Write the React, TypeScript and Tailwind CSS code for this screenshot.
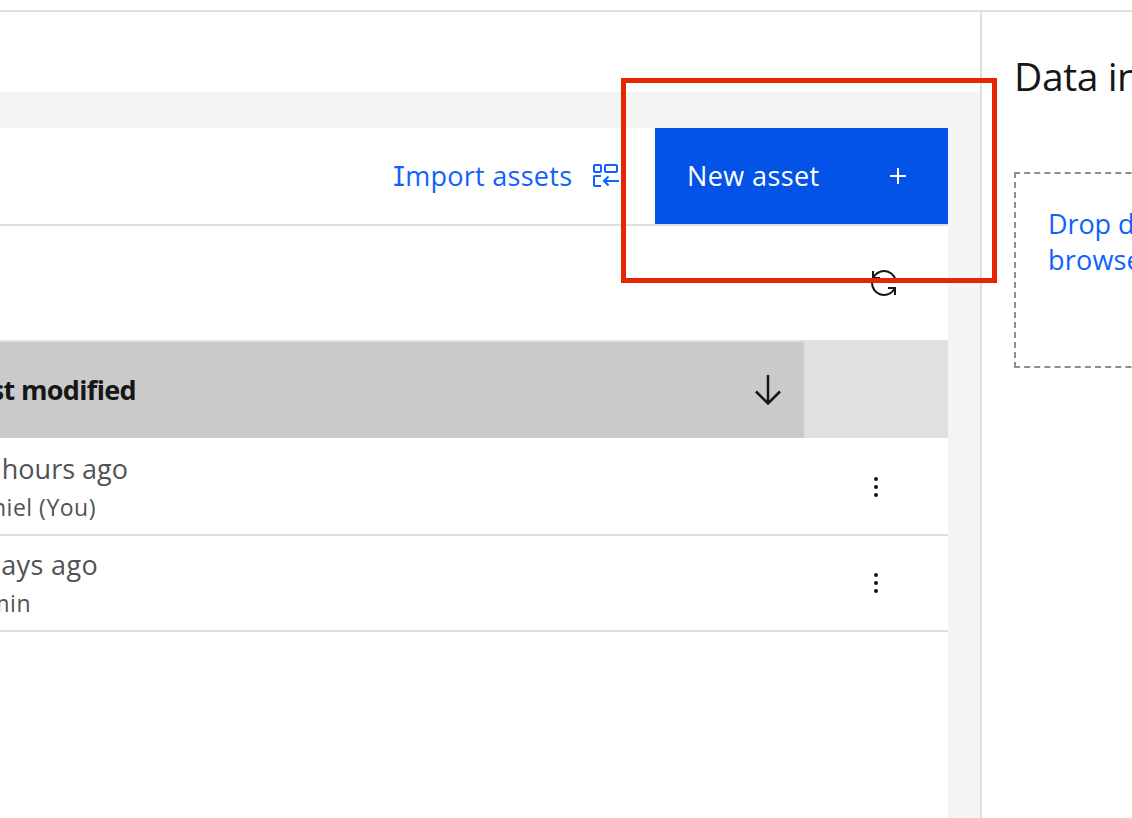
import React from "react";

function ImportIcon() {
  return (
    <svg width="32" height="32" viewBox="0 0 32 32" fill="none" stroke="currentColor" strokeWidth="2" className="shrink-0">
      <rect x="4" y="5" width="7" height="7" rx="1" />
      <rect x="15" y="5" width="12" height="7" rx="1" />
      <path d="M11 16H5a1 1 0 0 0-1 1v8a1 1 0 0 0 1 1h6" />
      <path d="M29 21H14M18.500 16.500 14 21l4.500 4.500" />
    </svg>
  );
}

function RenewIcon() {
  return (
    <svg width="32" height="32" viewBox="0 0 32 32" fill="#161616">
      <path d="M12 10H6.780A11 11 0 0 1 27 16h2A13 13 0 0 0 6 7.680V4H4v8h8ZM20 22h5.220A11 11 0 0 1 5 16H3a13 13 0 0 0 23 8.320V28h2v-8h-8Z" />
    </svg>
  );
}

function Dots() {
  return (
    <svg width="32" height="32" viewBox="0 0 32 32" fill="#161616">
      <circle cx="16" cy="8" r="2" />
      <circle cx="16" cy="16" r="2" />
      <circle cx="16" cy="24" r="2" />
    </svg>
  );
}

type RowProps = { time: string; author: string; className: string; timeClass: string; authorWidth: string };

function Row({ time, author, className, timeClass, authorWidth }: RowProps) {
  return (
    <div className={`flex items-start justify-between overflow-hidden border-b-2 border-[#e0e0e0] pr-14 text-[#525252] ${className}`}>
      <div>
        <div className={`flex h-9 justify-end whitespace-nowrap text-[27px] leading-9 ${timeClass}`}>{time}</div>
        <div className={`mt-0.5 flex h-9 justify-end whitespace-nowrap text-[23px] leading-9 tracking-[0.5px] ${authorWidth}`}>{author}</div>
      </div>
      <div className="mt-5">
        <Dots />
      </div>
    </div>
  );
}

export default function App() {
  return (
    <div className="relative flex h-[818px] w-[1132px] flex-col overflow-hidden bg-white font-['Open_Sans','Noto_Sans',sans-serif] text-[#161616]">
      <header className="h-3 shrink-0 border-b-2 border-[#e0e0e0]" />
      <div className="flex min-h-0 flex-1">
        <main className="flex w-[982px] shrink-0 flex-col border-r-2 border-[#e0e0e0]">
          <div className="h-20 shrink-0" />
          <div className="flex-1 bg-[#f4f4f4] pr-8 pt-9">
            <section className="h-full bg-white">
              <div className="flex h-[98px] items-start justify-end border-b-2 border-[#e0e0e0]">
                <button className="flex h-24 w-[229px] items-center justify-between text-[#0f62fe]">
                  <span className="whitespace-nowrap pt-0.5 text-[27px] tracking-[0.28px]">
                    <span className="font-['Inter'] [font-feature-settings:'cv08']">I</span>mport assets
                  </span>
                  <ImportIcon />
                </button>
                <button className="ml-[33px] flex h-24 w-[293px] items-center justify-between bg-[#0353e9] pl-8 pr-[34px] text-white">
                  <span className="whitespace-nowrap text-[27px] tracking-[0.4px]">New asset</span>
                  <svg width="32" height="32" viewBox="0 0 32 32" fill="currentColor">
                    <path d="M17 15V8h-2v7H8v2h7v7h2v-7h7v-2Z" />
                  </svg>
                </button>
              </div>
              <div className="flex h-[114px] items-center justify-end pr-12">
                <RenewIcon />
              </div>
              <div className="flex h-[98px] border-t-2 border-[#e0e0e0] bg-[#e0e0e0]">
                <div className="flex w-[804px] items-center justify-between overflow-hidden bg-[#cacaca] pr-5">
                  <span className="flex w-[136px] justify-end whitespace-nowrap text-[27px] font-bold tracking-[-0.65px]">st modified</span>
                  <svg width="32" height="32" viewBox="0 0 32 32" fill="none" stroke="#161616" strokeWidth="2.500">
                    <path d="M16 1v28M4 17.500l12 12 12-12" />
                  </svg>
                </div>
              </div>
              <Row time="hours ago" author="niel (You)" className="h-[98px] pt-[13px]" timeClass="w-32" authorWidth="w-24" />
              <Row time="ays ago" author="min" className="h-24 pt-[11px]" timeClass="w-[98px] tracking-[0.35px]" authorWidth="w-[31px]" />
            </section>
          </div>
        </main>
        <aside className="flex-1 overflow-hidden pl-8">
          <h2 className="mt-[38px] h-[54px] whitespace-nowrap text-[39px] leading-[52px] tracking-[-0.4px]">Data in</h2>
          <div className="mt-[68px] h-[196px] w-[320px] border-2 border-dashed border-[#8d8d8d] pl-8 pt-8 text-[27px] leading-9 text-[#0f62fe]">
            <div className="tracking-[-0.1px]">Drop d</div>
            <div className="tracking-[0.2px]">browse</div>
          </div>
        </aside>
      </div>
      <div className="pointer-events-none absolute left-[621px] top-[78px] h-[205px] w-[376px] border-5 border-[#e62600]" />
    </div>
  );
}
